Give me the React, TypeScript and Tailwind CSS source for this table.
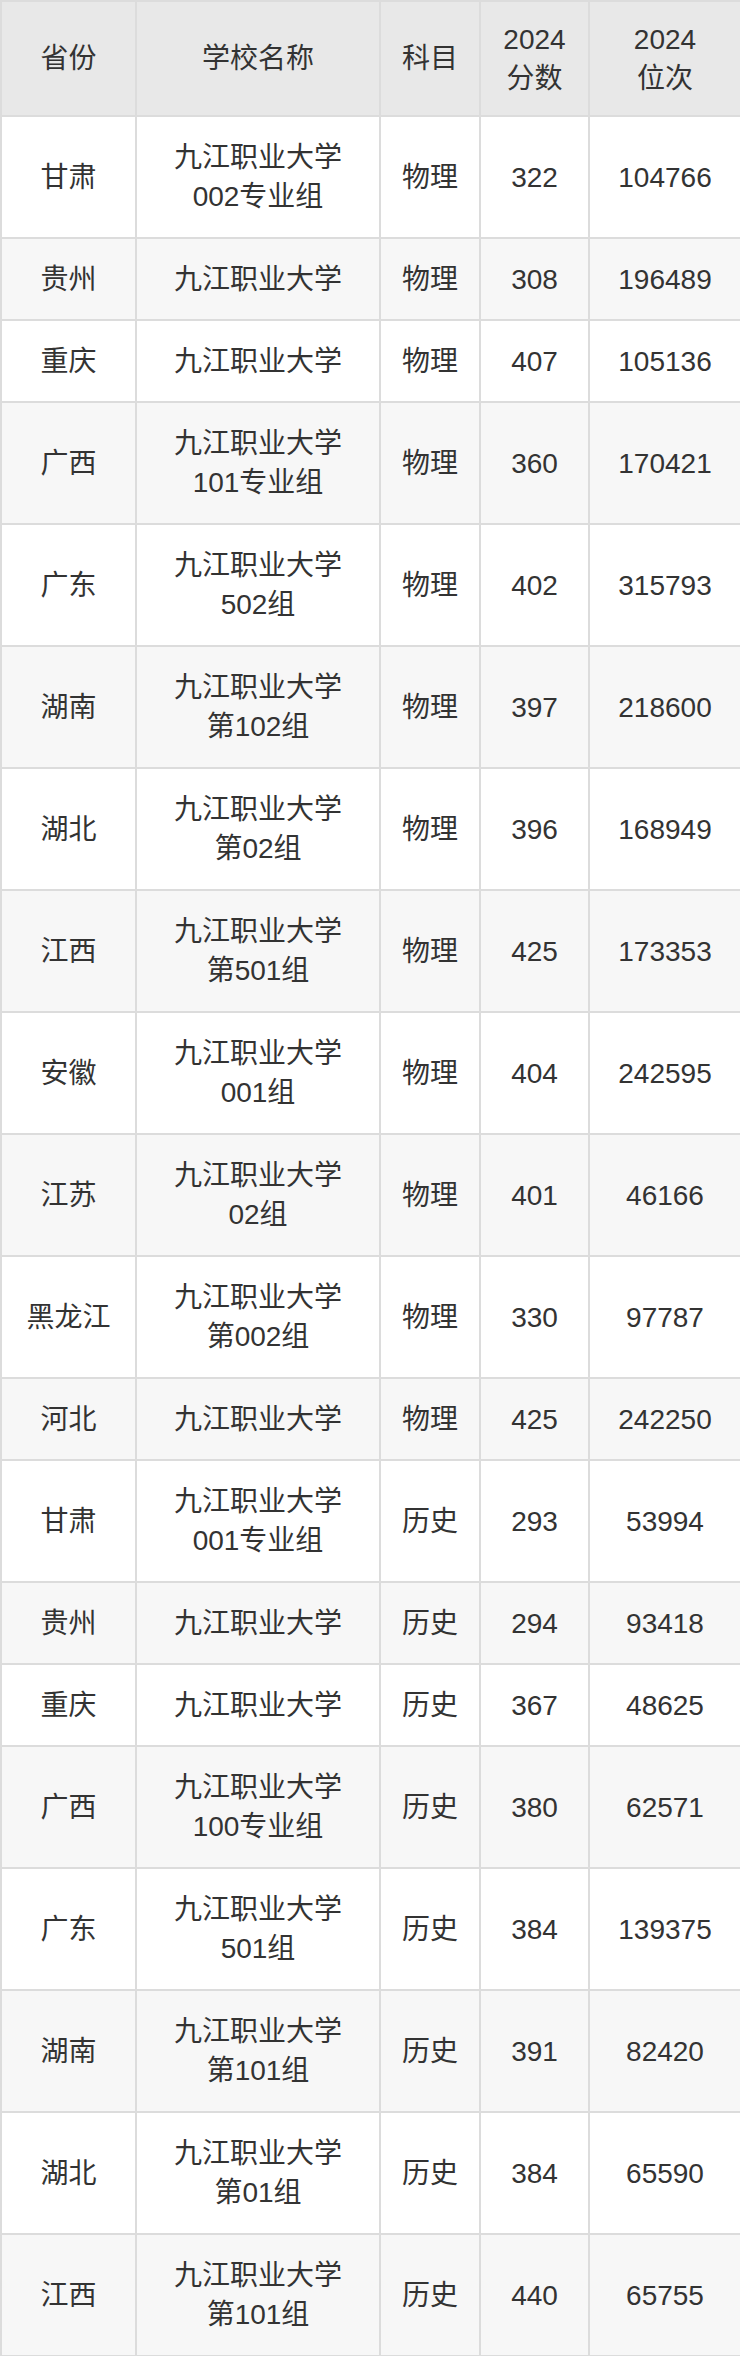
import React from "react";

type Row = { p: string; s: string[]; k: string; f: string; r: string };

const rows: Row[] = [
  { p: "甘肃", s: ["九江职业大学", "002专业组"], k: "物理", f: "322", r: "104766" },
  { p: "贵州", s: ["九江职业大学"], k: "物理", f: "308", r: "196489" },
  { p: "重庆", s: ["九江职业大学"], k: "物理", f: "407", r: "105136" },
  { p: "广西", s: ["九江职业大学", "101专业组"], k: "物理", f: "360", r: "170421" },
  { p: "广东", s: ["九江职业大学", "502组"], k: "物理", f: "402", r: "315793" },
  { p: "湖南", s: ["九江职业大学", "第102组"], k: "物理", f: "397", r: "218600" },
  { p: "湖北", s: ["九江职业大学", "第02组"], k: "物理", f: "396", r: "168949" },
  { p: "江西", s: ["九江职业大学", "第501组"], k: "物理", f: "425", r: "173353" },
  { p: "安徽", s: ["九江职业大学", "001组"], k: "物理", f: "404", r: "242595" },
  { p: "江苏", s: ["九江职业大学", "02组"], k: "物理", f: "401", r: "46166" },
  { p: "黑龙江", s: ["九江职业大学", "第002组"], k: "物理", f: "330", r: "97787" },
  { p: "河北", s: ["九江职业大学"], k: "物理", f: "425", r: "242250" },
  { p: "甘肃", s: ["九江职业大学", "001专业组"], k: "历史", f: "293", r: "53994" },
  { p: "贵州", s: ["九江职业大学"], k: "历史", f: "294", r: "93418" },
  { p: "重庆", s: ["九江职业大学"], k: "历史", f: "367", r: "48625" },
  { p: "广西", s: ["九江职业大学", "100专业组"], k: "历史", f: "380", r: "62571" },
  { p: "广东", s: ["九江职业大学", "501组"], k: "历史", f: "384", r: "139375" },
  { p: "湖南", s: ["九江职业大学", "第101组"], k: "历史", f: "391", r: "82420" },
  { p: "湖北", s: ["九江职业大学", "第01组"], k: "历史", f: "384", r: "65590" },
  { p: "江西", s: ["九江职业大学", "第101组"], k: "历史", f: "440", r: "65755" },
];

const cell = "border-2 border-[#dcdcdc] text-center align-middle px-1";

export default function App() {
  return (
    <div
      className="w-[740px] bg-white text-[#333333] text-[28px] leading-[39px]"
      style={{ fontFamily: '"Liberation Sans", "Noto Sans CJK SC", sans-serif' }}
    >
      <table className="w-[740px] table-fixed border-collapse">
        <colgroup>
          <col className="w-[135px]" />
          <col className="w-[244px]" />
          <col className="w-[100px]" />
          <col className="w-[109px]" />
          <col className="w-[152px]" />
        </colgroup>
        <thead>
          <tr className="h-[115px] bg-[#e8e8e8]">
            <th className={`${cell} font-normal`}>省份</th>
            <th className={`${cell} font-normal`}>学校名称</th>
            <th className={`${cell} font-normal`}>科目</th>
            <th className={`${cell} font-normal`}>
              2024
              <br />
              分数
            </th>
            <th className={`${cell} font-normal`}>
              2024
              <br />
              位次
            </th>
          </tr>
        </thead>
        <tbody>
          {rows.map((row, i) => (
            <tr
              key={i}
              className={`${row.s.length > 1 ? "h-[122px]" : "h-[82px]"} ${
                i % 2 === 1 ? "bg-[#f7f7f7]" : "bg-white"
              }`}
            >
              <td className={cell}>{row.p}</td>
              <td className={cell}>
                {row.s.map((l, j) => (
                  <div key={j}>{l}</div>
                ))}
              </td>
              <td className={cell}>{row.k}</td>
              <td className={cell}>{row.f}</td>
              <td className={cell}>{row.r}</td>
            </tr>
          ))}
        </tbody>
      </table>
    </div>
  );
}
